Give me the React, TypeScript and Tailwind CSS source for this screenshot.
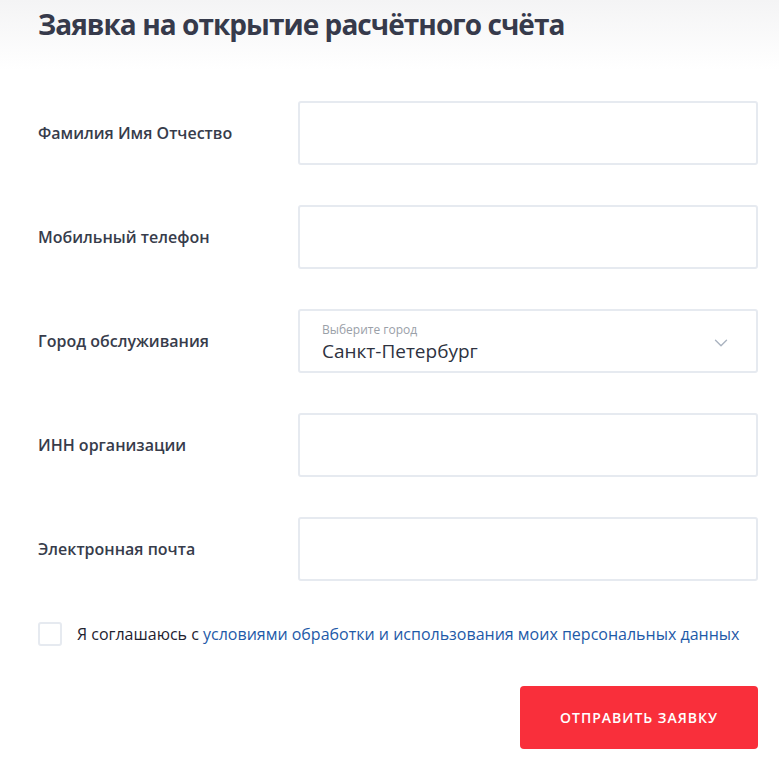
import { ChevronDown } from "lucide-react";

const fields = [
  { label: "Фамилия Имя Отчество" },
  { label: "Мобильный телефон" },
  { label: "Город обслуживания", select: true },
  { label: "ИНН организации" },
  { label: "Электронная почта" },
];

const App = () => {
  return (
    <div className="min-h-[773px] w-[779px] bg-gradient-to-b from-[#f4f4f5] to-white to-[70px] font-['Open_Sans',sans-serif] text-[#373c4b]">
      <h1 className="pl-[38px] pt-[4px] text-[28px] font-bold leading-[40px] tracking-[-0.95px] text-[#363a4b]">
        Заявка на открытие расчётного счёта
      </h1>

      <div className="mt-[57px] flex flex-col gap-[40px] pl-[38px] pr-[21px]">
        {fields.map((f) => (
          <div key={f.label} className="flex items-center">
            <label className="w-[260px] text-[16px] font-semibold">{f.label}</label>
            {f.select ? (
              <div className="flex h-[64px] flex-1 items-center rounded-[3px] border-2 border-[#e6eaf0] bg-white pl-[22px] pr-[24px] pt-[3px]">
                <div className="flex flex-1 flex-col">
                  <span className="text-[12px] leading-[14px] text-[#9aa0a8]">Выберите город</span>
                  <span className="mt-[2px] text-[19px] leading-[24px] text-[#2e3240]">Санкт-Петербург</span>
                </div>
                <ChevronDown className="h-[22px] w-[22px] text-[#aab3c0]" strokeWidth={1.5} />
              </div>
            ) : (
              <input className="block h-[64px] flex-1 rounded-[3px] border-2 border-[#e6eaf0] bg-white outline-none" />
            )}
          </div>
        ))}
      </div>

      <div className="mt-[41px] flex items-center pl-[38px]">
        <div className="h-[24px] w-[24px] rounded-[3px] border-2 border-[#e6eaf0] bg-white" />
        <p className="ml-[15px] text-[16px] text-[#1f2230]">
          Я соглашаюсь с{" "}
          <a className="text-[#1e5aa8]">условиями обработки и использования моих персональных данных</a>
        </p>
      </div>

      <div className="mt-[40px] flex justify-end pr-[21px]">
        <button className="h-[63px] w-[238px] rounded-[4px] bg-[#f92f3b] text-[14px] font-semibold tracking-[1px] text-white">
          ОТПРАВИТЬ ЗАЯВКУ
        </button>
      </div>
    </div>
  );
};

export default App;
